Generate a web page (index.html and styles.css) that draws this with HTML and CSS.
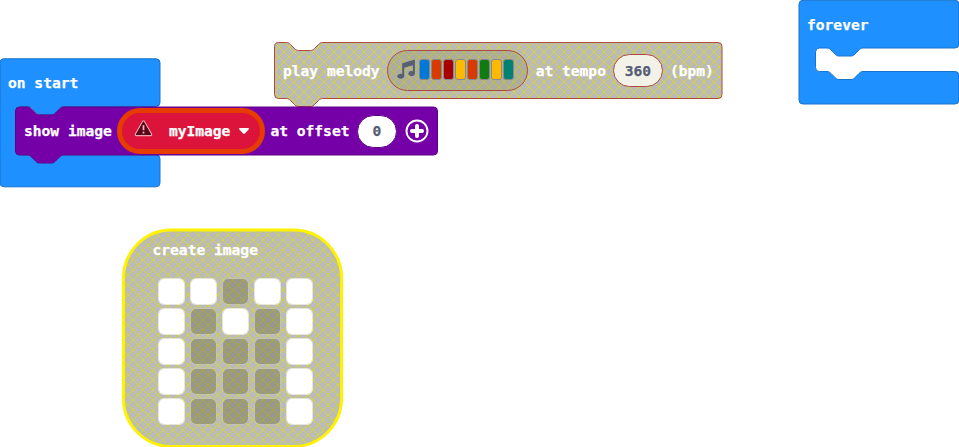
FILE: index.html
```html
<!DOCTYPE html>
<html lang="en">
<head>
<meta charset="utf-8">
<title>Block workspace</title>
<link rel="stylesheet" href="styles.css">
</head>
<body>
<main class="workspace">

  <section class="block on-start">
    <svg class="shape" width="162" height="130"><path class="event" d="M4 .8H156a4 4 0 0 1 4 4V44.500a4 4 0 0 1-4 4H64c-2 0-3 1-4 2l-4 4c-1 1-2 2-4 2H40c-2 0-3-1-4-2l-4-4c-1-1-2-2-4-2H20a4 4 0 0 0-4 4V92.800a4 4 0 0 0 4 4H156a4 4 0 0 1 4 4V124.800a4 4 0 0 1-4 4H4a4 4 0 0 1-4-4V4.800a4 4 0 0 1 4-4z"/></svg>
    <div class="row"><span>on start</span></div>
  </section>

  <section class="block forever">
    <svg class="shape" width="162" height="106"><path class="event" d="M4 .3H156a4 4 0 0 1 4 4V44a4 4 0 0 1-4 4H64c-2 0-3 1-4 2l-4 4c-1 1-2 2-4 2H40c-2 0-3-1-4-2l-4-4c-1-1-2-2-4-2H20.500a4 4 0 0 0-4 4V67.500a4 4 0 0 0 4 4H28c2 0 3 1 4 2l4 4c1 1 2 2 4 2H52c2 0 3-1 4-2l4-4c1-1 2-2 4-2H156a4 4 0 0 1 4 4V100a4 4 0 0 1-4 4H4a4 4 0 0 1-4-4V4.300a4 4 0 0 1 4-4z"/></svg>
    <div class="row"><span>forever</span></div>
  </section>

  <section class="block melody disabled">
    <svg class="shape" width="450" height="68">
      <defs>
        <pattern id="hatch" width="10" height="10" patternUnits="userSpaceOnUse">
          <rect width="10" height="10" fill="#aaa"/>
          <path d="M-2 -2L12 12M12 -2L-2 12" stroke="#cc0"/>
        </pattern>
      </defs>
      <path class="music" d="M.5 4.500a4 4 0 0 1 4-4H12.500c2 0 3 1 4 2l4 4c1 1 2 2 4 2H36.500c2 0 3-1 4-2l4-4c1-1 2-2 4-2H444a4 4 0 0 1 4 4V52.500a4 4 0 0 1-4 4H48.500c-2 0-3 1-4 2l-4 4c-1 1-2 2-4 2H24.500c-2 0-3-1-4-2l-4-4c-1-1-2-2-4-2H4.500a4 4 0 0 1-4-4z"/>
    </svg>
    <div class="row">
      <span>play melody</span>
      <div class="tune">
        <svg class="note" width="20" height="21" viewBox="0 0 20 21"><path d="M6.200 4.200L18.900.6V14.500a3.300 2.500 0 1 1-2-2.200V6.200L8.200 8.700V17.200a3.500 2.500 0 1 1-2-2.200z" fill="#575e75"/></svg>
        <div class="bars"><i class="blue"></i><i class="orange"></i><i class="red"></i><i class="gold"></i><i class="orange"></i><i class="green"></i><i class="gold"></i><i class="teal"></i></div>
      </div>
      <span>at tempo</span>
      <span class="number tempo">360</span>
      <span>(bpm)</span>
    </div>
  </section>

  <section class="block show-image">
    <svg class="shape" width="424" height="58"><path class="images" transform="translate(.5 0)" d="M0 4a4 4 0 0 1 4-4H12c2 0 3 1 4 2l4 4c1 1 2 2 4 2H36c2 0 3-1 4-2l4-4c1-1 2-2 4-2H418a4 4 0 0 1 4 4V44a4 4 0 0 1-4 4H48c-2 0-3 1-4 2l-4 4c-1 1-2 2-4 2H24c-2 0-3-1-4-2l-4-4c-1-1-2-2-4-2H4a4 4 0 0 1-4-4z"/></svg>
    <div class="row">
      <span>show image</span>
      <div class="variable">
        <svg class="warning" width="19" height="17" viewBox="0 0 19 17"><path d="M8.500 1.500Q9.500 0 10.500 1.500L17.600 14Q18 15.500 16.800 15.600H2.200Q1 15.500 1.400 14z" fill="#5c0718" stroke="#e8a6b3" stroke-width="1.100"/><path d="M9.500 5.200V10.200M9.500 11.800V13.400" stroke="#f4bcc7" stroke-width="1.700"/></svg>
        <span>myImage</span>
        <svg class="arrow" width="12" height="8" viewBox="0 0 12 8"><path d="M2 1H10Q11.700 1 10.600 2.400L7.200 6.200Q6 7.300 4.800 6.200L1.400 2.400Q.3 1 2 1z" fill="#fff"/></svg>
      </div>
      <span>at offset</span>
      <span class="number offset">0</span>
      <svg class="plus" width="24" height="24" viewBox="0 0 24 24"><circle cx="12" cy="12" r="10.500" fill="none" stroke="#fff" stroke-width="1.900"/><path d="M12 7V17M7 12H17" stroke="#fff" stroke-width="4" stroke-linecap="round"/></svg>
    </div>
  </section>

  <section class="block create-image">
    <svg class="shape" width="222" height="222">
      <g class="disabled-shape"><rect x=".5" y="0" width="218" height="216.500" rx="48" fill="url(#hatch)"/></g>
      <rect x=".5" y="0" width="218" height="216.500" rx="48" fill="none" stroke="#fff200" stroke-width="3"/>
    </svg>
    <div class="title">create image</div>
    <div class="leds">
      <b class="on"></b><b class="on"></b><b></b><b class="on"></b><b class="on"></b>
      <b class="on"></b><b></b><b class="on"></b><b></b><b class="on"></b>
      <b class="on"></b><b></b><b></b><b></b><b class="on"></b>
      <b class="on"></b><b></b><b></b><b></b><b class="on"></b>
      <b class="on"></b><b></b><b></b><b></b><b class="on"></b>
    </div>
  </section>

</main>
</body>
</html>
```

FILE: styles.css
```css
* { box-sizing: border-box; }

body {
  margin: 0;
  background: #fff;
  color: #fff;
  font: bold 14.6px/20px "DejaVu Sans Mono", monospace;
  -webkit-text-stroke: .25px currentColor;
  white-space: nowrap;
}

.workspace {
  position: relative;
  width: 959px;
  height: 447px;
  overflow: hidden;
}

/* Blocks sit freely on the workspace canvas. */
.block { position: absolute; }

.shape {
  position: absolute;
  left: 0;
  top: 0;
  overflow: visible;
}

.event { fill: #1e90ff; stroke: #1873cc; }
.images { fill: #7600a8; stroke: #5e0086; }
.music { fill: url(#hatch); stroke: #9c1c0c; }

.disabled > .shape,
.disabled-shape { opacity: .8; }

.row {
  position: relative;
  display: flex;
  align-items: center;
  height: 48px;
  padding-left: 8px;
}

.on-start { left: 0; top: 58px; }
.on-start .row { height: 50px; }
.forever { left: 799px; top: 0; }
.forever .row { height: 50px; }

.melody { left: 274px; top: 42px; }
.melody .row { height: 57px; padding-left: 9px; }

.tune {
  display: flex;
  align-items: center;
  width: 141px;
  height: 41px;
  margin: 0 8px 0 7px;
  padding: 0 0 2px 8px;
  border: 1px solid #b04a3d;
  border-radius: 21px;
  background: rgba(110, 110, 60, .18);
}

.note { margin-right: 3px; }

.bars { display: flex; gap: 1px; }

.bars i {
  width: 11px;
  height: 21px;
  border: 1px solid #898989;
  border-radius: 3px;
}

.blue { background: #0078d7; }
.orange { background: #d83b01; }
.red { background: #a80000; }
.gold { background: #ffb900; }
.green { background: #107c10; }
.teal { background: #008272; }

.number {
  display: flex;
  align-items: center;
  justify-content: center;
  height: 33px;
  border-radius: 17px;
  color: #575e75;
}

.tempo {
  width: 50px;
  margin: 0 7px;
  border: 1px solid #b04a3d;
  background: #f2f2e9;
}

.show-image { left: 15px; top: 107px; }
.show-image .row { padding-left: 9px; }

.variable {
  display: flex;
  align-items: center;
  width: 148px;
  height: 46px;
  margin: 0 5.5px 0 5px;
  padding-left: 12.5px;
  border: 5px solid #e63c00;
  border-radius: 23px;
  background: #dc143c;
}

.warning { margin: 0 15.500px 6px 0; }
.arrow { margin-left: 8px; }

.offset {
  width: 40px;
  margin: 0 8px 0 7.500px;
  border: 1px solid #5e0086;
  background: #fff;
}

.create-image {
  left: 123px;
  top: 230px;
}

.title {
  position: relative;
  padding: 10px 0 0 29.5px;
}

.leds {
  position: relative;
  display: grid;
  grid-template-columns: repeat(5, 27px);
  grid-auto-rows: 27px;
  gap: 3px 5px;
  margin: 18px 0 0 35px;
}

.leds b {
  border: 1px solid rgba(200, 200, 195, .4);
  border-radius: 6px;
  background: rgba(60, 60, 30, .28);
  background-clip: padding-box;
}

.leds .on {
  border-color: rgba(255, 255, 255, .6);
  background-color: #fff;
}
```
